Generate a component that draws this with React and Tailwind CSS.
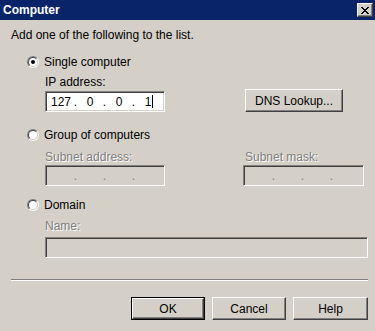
import React from "react";

const font = { fontFamily: '"Liberation Sans", Arial, sans-serif' };

const Radio = ({ checked }) => {
    return (
        <div className="w-3 h-3 rounded-full border border-t-[#808080] border-l-[#808080] border-b-white border-r-white">
            <div className="w-full h-full rounded-full border border-t-[#404040] border-l-[#404040] border-b-[#d4d0c8] border-r-[#d4d0c8] bg-white flex items-center justify-center">
                {checked && <div className="w-1 h-1 rounded-full bg-black" />}
            </div>
        </div>
    );
};

const Sunken = ({ className, children }) => {
    return (
        <div
            className={
                "border border-t-[#808080] border-l-[#808080] border-b-white border-r-white shadow-[inset_1px_1px_0_#404040,inset_-1px_-1px_0_#d4d0c8] " +
                className
            }
        >
            {children}
        </div>
    );
};

const IpField = ({ values, disabled }) => {
    const parts = values || ["", "", "", ""];
    return (
        <div className="flex items-center h-full pl-[3px] text-[12px] leading-none">
            {parts.map((v, i) => (
                <React.Fragment key={i}>
                    <div className="w-[24px] text-center text-black">{v}</div>
                    {i < 3 && (
                        <div className={"w-[5px] text-center " + (disabled ? "text-[#808080]" : "text-black")}>.</div>
                    )}
                </React.Fragment>
            ))}
        </div>
    );
};

const Button = ({ label, isDefault, className }) => {
    const inner = (
        <div className="h-full w-full border border-t-white border-l-white border-b-[#404040] border-r-[#404040] shadow-[inset_-1px_-1px_0_#808080] flex items-center justify-center text-[12px] text-black">
            {label}
        </div>
    );
    if (isDefault) {
        return <div className={"border border-black " + className}>{inner}</div>;
    }
    return <div className={className}>{inner}</div>;
};

const DisabledLabel = ({ children, className }) => (
    <div className={"h-[14px] text-[12px] leading-[14px] text-[#808080] [text-shadow:1px_1px_0_#fff] " + (className || "")}>
        {children}
    </div>
);

const App = () => {
    return (
        <div className="w-[375px] h-[331px] bg-[#d4d0c8] overflow-hidden" style={font}>
            {/* title bar */}
            <div className="h-[20px] bg-[#0a246a] flex items-center justify-between pl-[3px] pr-[2px]">
                <span className="text-white font-bold text-[12px] leading-none">Computer</span>
                <div className="w-[16px] h-[14px] bg-[#d4d0c8] border border-t-white border-l-white border-b-[#404040] border-r-[#404040] shadow-[inset_-1px_-1px_0_#808080] flex items-center justify-center">
                    <svg width="8" height="7" viewBox="0 0 8 7">
                        <path d="M0 0 L7 7 M1 0 L8 7 M7 0 L0 7 M8 0 L1 7" stroke="#000" strokeWidth="1" />
                    </svg>
                </div>
            </div>

            <div className="px-[11px] text-[12px] text-black">
                <div className="mt-[8px] h-[14px] leading-[14px]">Add one of the following to the list.</div>

                <div className="mt-[13px] h-[14px] flex items-center pl-[16px] gap-[5px]">
                    <Radio checked />
                    <span className="leading-[14px]">Single computer</span>
                </div>

                <div className="pl-[34px]">
                    <div className="mt-[6px] h-[14px] leading-[14px]">IP address:</div>
                    <div className="flex items-end h-[23px]">
                        <Sunken className="w-[120px] h-[21px] bg-white">
                            <div className="flex items-center h-full relative">
                                <IpField values={["127", "0", "0", "1"]} />
                                <div className="w-px h-[13px] bg-black ml-[-8px]" />
                            </div>
                        </Sunken>
                        <Button label="DNS Lookup..." className="ml-[80px] w-[98px] h-[23px]" />
                    </div>
                </div>

                <div className="mt-[16px] h-[14px] flex items-center pl-[16px] gap-[5px]">
                    <Radio />
                    <span className="leading-[14px]">Group of computers</span>
                </div>

                <div className="pl-[34px] flex">
                    <div className="w-[201px]">
                        <DisabledLabel className="mt-[8px]">Subnet address:</DisabledLabel>
                        <Sunken className="mt-[1px] w-[120px] h-[21px] bg-[#d4d0c8]">
                            <IpField disabled />
                        </Sunken>
                    </div>
                    <div>
                        <DisabledLabel className="mt-[8px] pl-[2px]">Subnet mask:</DisabledLabel>
                        <Sunken className="mt-[1px] w-[121px] h-[21px] bg-[#d4d0c8]">
                            <IpField disabled />
                        </Sunken>
                    </div>
                </div>

                <div className="mt-[12px] h-[14px] flex items-center pl-[16px] gap-[5px]">
                    <Radio />
                    <span className="leading-[14px]">Domain</span>
                </div>

                <div className="pl-[34px]">
                    <DisabledLabel className="mt-[7px]">Name:</DisabledLabel>
                    <Sunken className="mt-[4px] w-[323px] h-[21px] bg-[#d4d0c8]" />
                </div>

                <div className="mt-[21px] h-[2px] border-t border-t-[#808080] border-b border-b-white w-[357px]" />

                <div className="mt-[16px] flex justify-end gap-[7px] mr-[-4px]">
                    <Button label="OK" isDefault className="w-[74px] h-[23px]" />
                    <Button label="Cancel" className="w-[74px] h-[23px]" />
                    <Button label="Help" className="w-[75px] h-[23px]" />
                </div>
            </div>
        </div>
    );
};

export default App;
